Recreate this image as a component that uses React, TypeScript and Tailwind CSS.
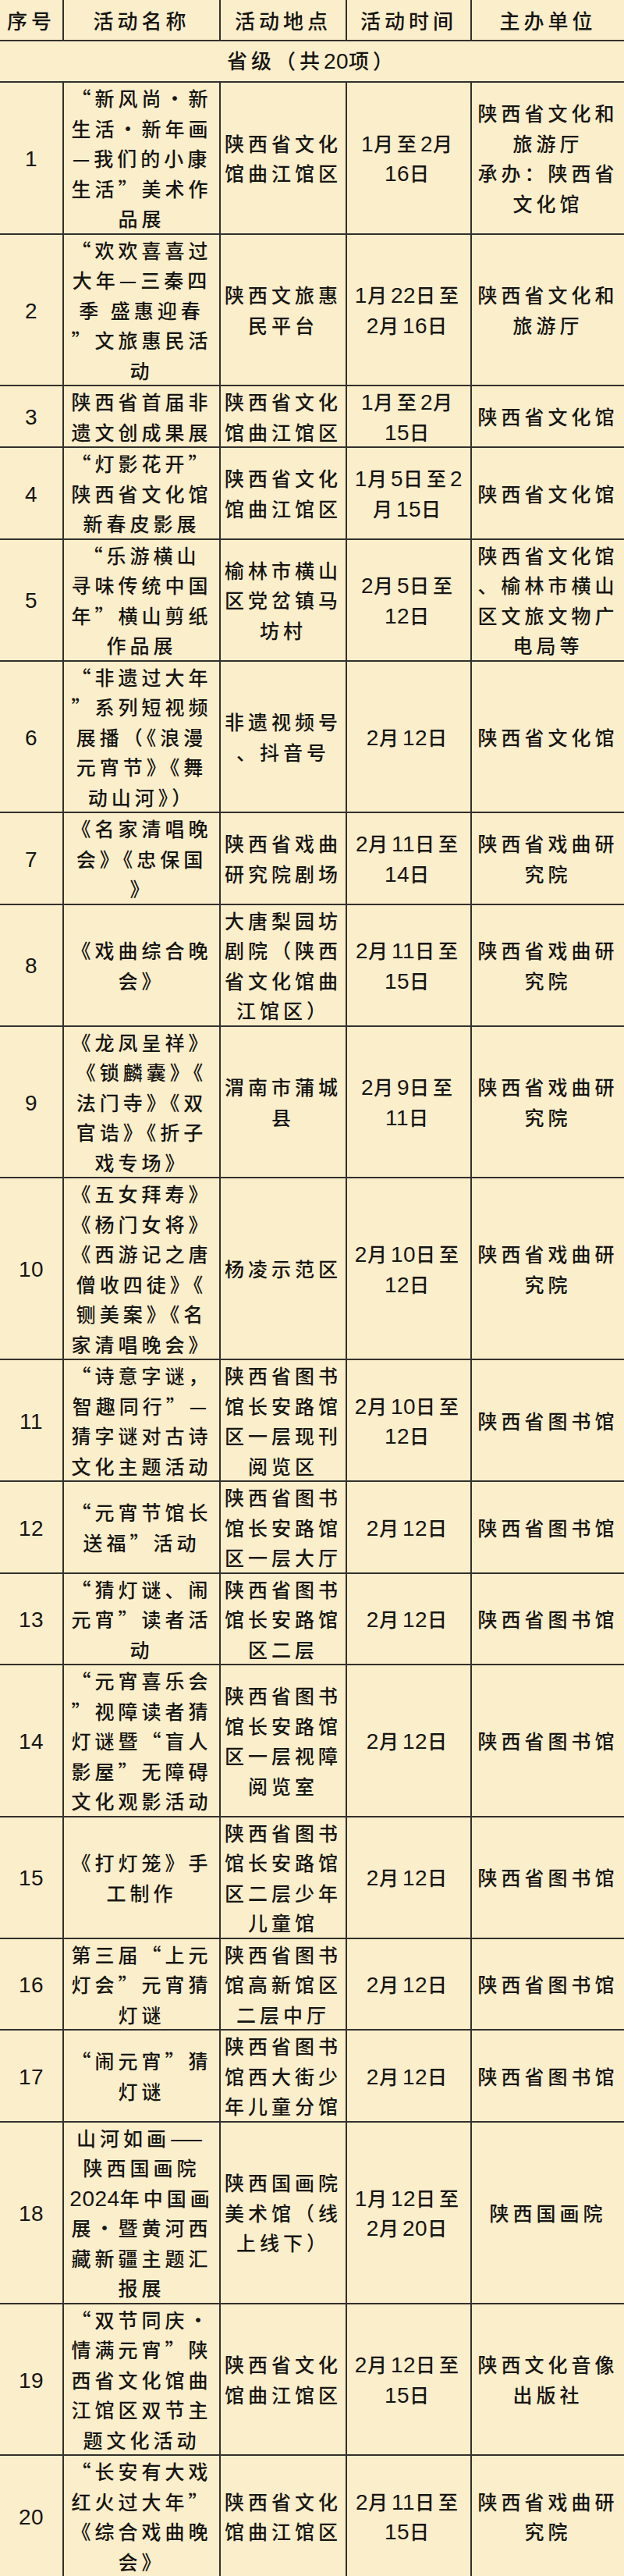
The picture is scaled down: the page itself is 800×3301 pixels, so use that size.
type Row = {
  no: string;
  name: string[];
  place: string[];
  time: string[];
  org: string[];
};

const ROWS: Row[] = [
  {
    no: '1',
    name: ['“新风尚·新', '生活·新年画', '—我们的小康', '生活”美术作', '品展'],
    place: ['陕西省文化', '馆曲江馆区'],
    time: ['1月至2月', '16日'],
    org: ['陕西省文化和', '旅游厅', '承办：陕西省', '文化馆'],
  },
  {
    no: '2',
    name: ['“欢欢喜喜过', '大年—三秦四', '季 盛惠迎春', '”文旅惠民活', '动'],
    place: ['陕西文旅惠', '民平台'],
    time: ['1月22日至', '2月16日'],
    org: ['陕西省文化和', '旅游厅'],
  },
  {
    no: '3',
    name: ['陕西省首届非', '遗文创成果展'],
    place: ['陕西省文化', '馆曲江馆区'],
    time: ['1月至2月', '15日'],
    org: ['陕西省文化馆'],
  },
  {
    no: '4',
    name: ['“灯影花开”', '陕西省文化馆', '新春皮影展'],
    place: ['陕西省文化', '馆曲江馆区'],
    time: ['1月5日至2', '月15日'],
    org: ['陕西省文化馆'],
  },
  {
    no: '5',
    name: ['“乐游横山', '寻味传统中国', '年”横山剪纸', '作品展'],
    place: ['榆林市横山', '区党岔镇马', '坊村'],
    time: ['2月5日至', '12日'],
    org: ['陕西省文化馆', '、榆林市横山', '区文旅文物广', '电局等'],
  },
  {
    no: '6',
    name: ['“非遗过大年', '”系列短视频', '展播（《浪漫', '元宵节》《舞', '动山河》）'],
    place: ['非遗视频号', '、抖音号'],
    time: ['2月12日'],
    org: ['陕西省文化馆'],
  },
  {
    no: '7',
    name: ['《名家清唱晚', '会》《忠保国', '》'],
    place: ['陕西省戏曲', '研究院剧场'],
    time: ['2月11日至', '14日'],
    org: ['陕西省戏曲研', '究院'],
  },
  {
    no: '8',
    name: ['《戏曲综合晚', '会》'],
    place: ['大唐梨园坊', '剧院（陕西', '省文化馆曲', '江馆区）'],
    time: ['2月11日至', '15日'],
    org: ['陕西省戏曲研', '究院'],
  },
  {
    no: '9',
    name: ['《龙凤呈祥》', '《锁麟囊》《', '法门寺》《双', '官诰》《折子', '戏专场》'],
    place: ['渭南市蒲城', '县'],
    time: ['2月9日至', '11日'],
    org: ['陕西省戏曲研', '究院'],
  },
  {
    no: '10',
    name: ['《五女拜寿》', '《杨门女将》', '《西游记之唐', '僧收四徒》《', '铡美案》《名', '家清唱晚会》'],
    place: ['杨凌示范区'],
    time: ['2月10日至', '12日'],
    org: ['陕西省戏曲研', '究院'],
  },
  {
    no: '11',
    name: ['“诗意字谜，', '智趣同行”—', '猜字谜对古诗', '文化主题活动'],
    place: ['陕西省图书', '馆长安路馆', '区一层现刊', '阅览区'],
    time: ['2月10日至', '12日'],
    org: ['陕西省图书馆'],
  },
  {
    no: '12',
    name: ['“元宵节馆长', '送福”活动'],
    place: ['陕西省图书', '馆长安路馆', '区一层大厅'],
    time: ['2月12日'],
    org: ['陕西省图书馆'],
  },
  {
    no: '13',
    name: ['“猜灯谜、闹', '元宵”读者活', '动'],
    place: ['陕西省图书', '馆长安路馆', '区二层'],
    time: ['2月12日'],
    org: ['陕西省图书馆'],
  },
  {
    no: '14',
    name: ['“元宵喜乐会', '”视障读者猜', '灯谜暨“盲人', '影屋”无障碍', '文化观影活动'],
    place: ['陕西省图书', '馆长安路馆', '区一层视障', '阅览室'],
    time: ['2月12日'],
    org: ['陕西省图书馆'],
  },
  {
    no: '15',
    name: ['《打灯笼》手', '工制作'],
    place: ['陕西省图书', '馆长安路馆', '区二层少年', '儿童馆'],
    time: ['2月12日'],
    org: ['陕西省图书馆'],
  },
  {
    no: '16',
    name: ['第三届“上元', '灯会”元宵猜', '灯谜'],
    place: ['陕西省图书', '馆高新馆区', '二层中厅'],
    time: ['2月12日'],
    org: ['陕西省图书馆'],
  },
  {
    no: '17',
    name: ['“闹元宵”猜', '灯谜'],
    place: ['陕西省图书', '馆西大街少', '年儿童分馆'],
    time: ['2月12日'],
    org: ['陕西省图书馆'],
  },
  {
    no: '18',
    name: ['山河如画——', '陕西国画院', '2024年中国画', '展·暨黄河西', '藏新疆主题汇', '报展'],
    place: ['陕西国画院', '美术馆（线', '上线下）'],
    time: ['1月12日至', '2月20日'],
    org: ['陕西国画院'],
  },
  {
    no: '19',
    name: ['“双节同庆·', '情满元宵”陕', '西省文化馆曲', '江馆区双节主', '题文化活动'],
    place: ['陕西省文化', '馆曲江馆区'],
    time: ['2月12日至', '15日'],
    org: ['陕西文化音像', '出版社'],
  },
  {
    no: '20',
    name: ['“长安有大戏', '红火过大年”', '《综合戏曲晚', '会》'],
    place: ['陕西省文化', '馆曲江馆区'],
    time: ['2月11日至', '15日'],
    org: ['陕西省戏曲研', '究院'],
  },
];

// digits are set in a narrow latin face, the rest in the CJK face
function Text({ s }: { s: string }) {
  const parts = s.split(/(\d+)/);
  return (
    <>
      {parts.map((p, i) =>
        /^\d+$/.test(p) ? (
          <span
            key={i}
            className="font-['Liberation_Sans_Narrow','Liberation_Sans',sans-serif] text-[28px] tracking-[0.5px]"
          >
            {p}
          </span>
        ) : (
          <span key={i}>{p}</span>
        )
      )}
    </>
  );
}

function Cell({ lines, first }: { lines: string[]; first?: boolean }) {
  return (
    <div
      className={`flex flex-col items-center justify-center text-center ${first ? '' : 'border-l-2 border-[#33312c]'
        }`}
    >
      {lines.map((l, i) => (
        <div key={i} className="h-[38.5px] leading-[38.5px] whitespace-nowrap">
          <Text s={l} />
        </div>
      ))}
    </div>
  );
}

const GRID = 'grid grid-cols-[80px_201px_162px_160px_197px]';

export default function App() {
  return (
    <div className="w-[800px] bg-[#faeecb] text-[#161512] font-['Noto_Sans_CJK_SC',sans-serif] text-[25px] tracking-[5px] font-medium">
      {/* Header */}
      <div className={`${GRID} h-[53px] border-b-2 border-[#33312c] text-[26px]`}>
        {['序号', '活动名称', '活动地点', '活动时间', '主办单位'].map((h, i) => (
          <div
            key={h}
            className={`flex items-center justify-center ${i ? 'border-l-2 border-[#33312c]' : ''}`}
          >
            {h}
          </div>
        ))}
      </div>

      {/* Section */}
      <div className="h-[53px] border-b-2 border-[#33312c] flex items-center justify-center text-[26px]">
        <span>
          省级（共<Text s="20" />项）
        </span>
      </div>

      {/* Rows */}
      {ROWS.map((r, idx) => (
        <div
          key={r.no}
          className={`${GRID} ${idx !== ROWS.length - 1 ? 'border-b-2 border-[#33312c]' : ''}`}
        >
          <Cell lines={[r.no]} first />
          <Cell lines={r.name} />
          <Cell lines={r.place} />
          <Cell lines={r.time} />
          <Cell lines={r.org} />
        </div>
      ))}
    </div>
  );
}
